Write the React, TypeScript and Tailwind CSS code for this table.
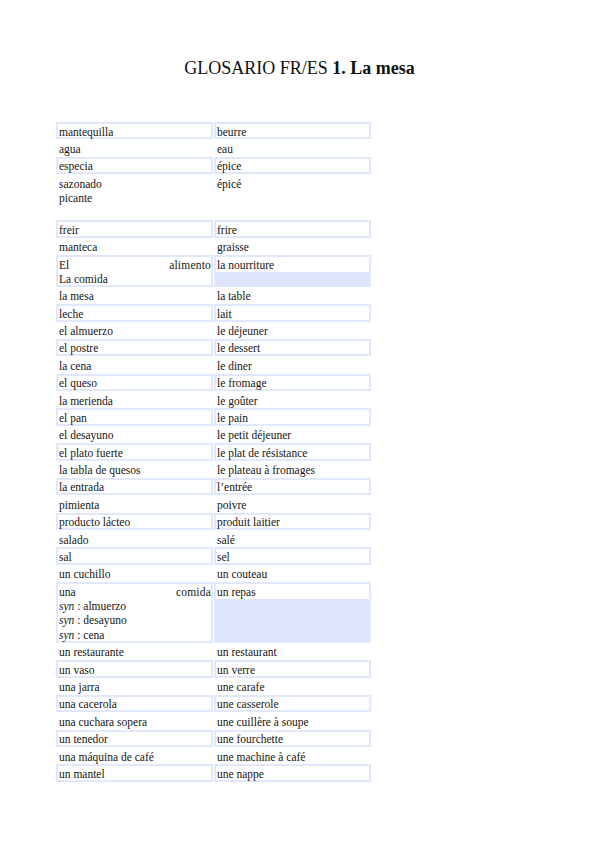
import React from "react";

type Row = {
  left: React.ReactNode[];
  right: string;
  lines: number;
  justifyFirst?: [string, string];
};

const syn = (w: string) => (
  <span>
    <i>syn</i> : {w}
  </span>
);

const rows: Row[] = [
  { left: ["mantequilla"], right: "beurre", lines: 1 },
  { left: ["agua"], right: "eau", lines: 1 },
  { left: ["especia"], right: "épice", lines: 1 },
  { left: ["sazonado", "picante", ""], right: "épicé", lines: 3 },
  { left: ["freir"], right: "frire", lines: 1 },
  { left: ["manteca"], right: "graisse", lines: 1 },
  { left: ["", "La comida"], right: "la nourriture", lines: 2, justifyFirst: ["El", "alimento"] },
  { left: ["la mesa"], right: "la table", lines: 1 },
  { left: ["leche"], right: "lait", lines: 1 },
  { left: ["el almuerzo"], right: "le déjeuner", lines: 1 },
  { left: ["el postre"], right: "le dessert", lines: 1 },
  { left: ["la cena"], right: "le diner", lines: 1 },
  { left: ["el queso"], right: "le fromage", lines: 1 },
  { left: ["la merienda"], right: "le goûter", lines: 1 },
  { left: ["el pan"], right: "le pain", lines: 1 },
  { left: ["el desayuno"], right: "le petit déjeuner", lines: 1 },
  { left: ["el plato fuerte"], right: "le plat de résistance", lines: 1 },
  { left: ["la tabla de quesos"], right: "le plateau à fromages", lines: 1 },
  { left: ["la entrada"], right: "l’entrée", lines: 1 },
  { left: ["pimienta"], right: "poivre", lines: 1 },
  { left: ["producto lácteo"], right: "produit laitier", lines: 1 },
  { left: ["salado"], right: "salé", lines: 1 },
  { left: ["sal"], right: "sel", lines: 1 },
  { left: ["un cuchillo"], right: "un couteau", lines: 1 },
  {
    left: ["", syn("almuerzo"), syn("desayuno"), syn("cena")],
    right: "un repas",
    lines: 4,
    justifyFirst: ["una", "comida"],
  },
  { left: ["un restaurante"], right: "un restaurant", lines: 1 },
  { left: ["un vaso"], right: "un verre", lines: 1 },
  { left: ["una jarra"], right: "une carafe", lines: 1 },
  { left: ["una cacerola"], right: "une casserole", lines: 1 },
  { left: ["una cuchara sopera"], right: "une cuillère à soupe", lines: 1 },
  { left: ["un tenedor"], right: "une fourchette", lines: 1 },
  { left: ["una máquina de café"], right: "une machine à café", lines: 1 },
  { left: ["un mantel"], right: "une nappe", lines: 1 },
];

const heightClass: Record<number, string> = {
  1: "h-[17.38px]",
  2: "h-[31.78px]",
  3: "h-[46.18px]",
  4: "h-[60.58px]",
};

function LeftCell({ row, boxed }: { row: Row; boxed: boolean }) {
  return (
    <div
      className={`${heightClass[row.lines]} flex flex-col pt-[0.5px] pl-[1px] ${
        boxed ? "border-2 border-[#e2e8fb]" : "border-2 border-transparent"
      }`}
    >
      {row.left.map((l, i) =>
        i === 0 && row.justifyFirst ? (
          <div key={i} className="flex justify-between h-[14.4px] leading-[14.4px]">
            <span>{row.justifyFirst[0]}</span>
            <span className="tracking-[0.2px]">{row.justifyFirst[1]}</span>
          </div>
        ) : (
          <div key={i} className="h-[14.4px] leading-[14.4px] whitespace-nowrap">
            {l}
          </div>
        )
      )}
    </div>
  );
}

function RightCell({ row, boxed }: { row: Row; boxed: boolean }) {
  const multiBoxed = boxed && row.lines > 1;
  return (
    <div
      className={`${heightClass[row.lines]} flex flex-col ${
        boxed ? "border-2 border-[#e2e8fb]" : "border-2 border-transparent"
      }`}
    >
      <div className="h-[14.4px] leading-[14.4px] pt-[0.5px] pl-[1px] whitespace-nowrap box-content">
        {row.right}
      </div>
      {multiBoxed && <div className="flex-1 bg-[#dde4fc]" />}
    </div>
  );
}

export default function App() {
  return (
    <div className="w-[599px] h-[848px] bg-white text-[#151515] font-['Liberation_Serif','Times_New_Roman',serif]">
      <div className="pt-[57px] text-center text-[18px] leading-[22px] text-[#111]">
        GLOSARIO FR/ES <span className="font-bold">1. La mesa</span>
      </div>
      <div className="pl-[56px] pt-[43px] text-[11.5px]">
        <div className="flex flex-col w-[315px]">
          {rows.map((row, idx) => {
            const boxed = idx % 2 === 0;
            return (
              <div key={idx} className="grid grid-cols-[157px_157px] gap-x-[1px]">
                <LeftCell row={row} boxed={boxed} />
                <RightCell row={row} boxed={boxed} />
              </div>
            );
          })}
        </div>
      </div>
    </div>
  );
}
